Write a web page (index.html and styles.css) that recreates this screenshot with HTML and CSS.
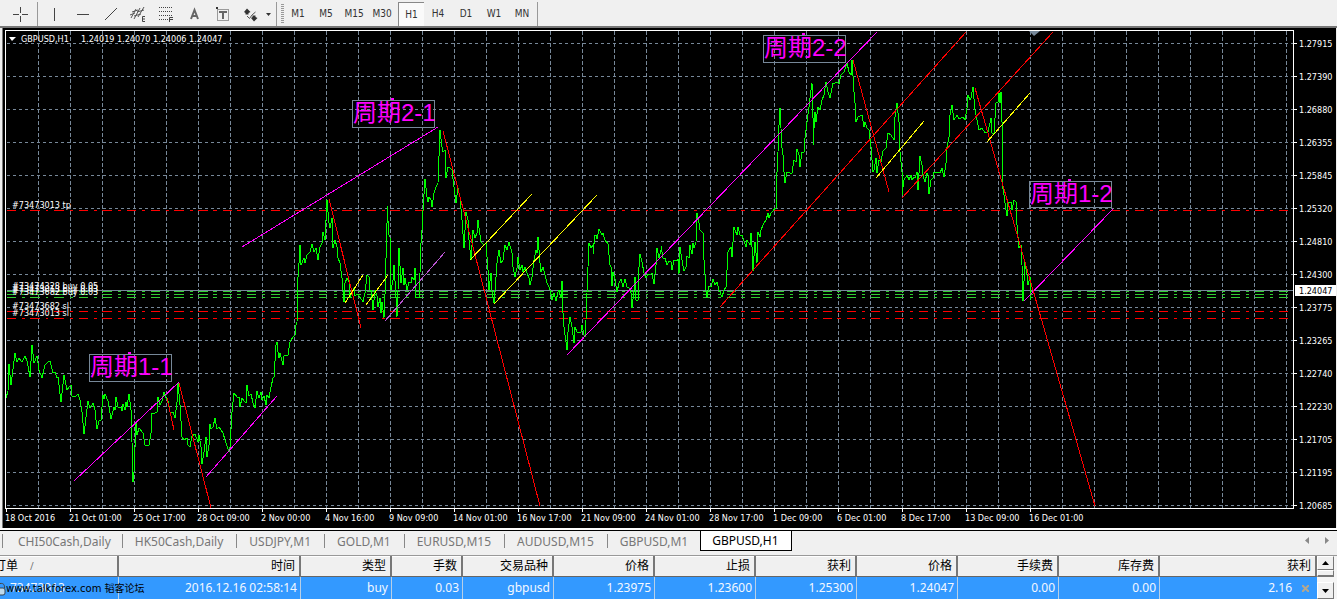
FILE: index.html
```html
<!DOCTYPE html>
<html lang="zh-CN">
<head>
<meta charset="utf-8">
<title>GBPUSD,H1</title>
<link rel="stylesheet" href="styles.css">
</head>
<body>
<div class="app">
  <header class="toolbar">
    <div class="tools">
      <button class="tool first" aria-label="Crosshair"><svg width="16" height="16" viewBox="0 0 16 16"><path d="M7.500 1V7M7.500 10V16M0 8.500H6M9 8.500H15" class="ink"/></svg></button>
    </div>
    <div class="tools sep">
      <button class="tool" aria-label="Vertical line"><svg width="16" height="16" viewBox="0 0 16 16"><path d="M8.500 2V15" class="ink"/></svg></button>
      <button class="tool" aria-label="Horizontal line"><svg width="16" height="16" viewBox="0 0 16 16"><path d="M3 8.500H15" class="ink"/></svg></button>
      <button class="tool" aria-label="Trendline"><svg width="16" height="16" viewBox="0 0 16 16"><path d="M3 14L15 2" class="ink"/></svg></button>
      <button class="tool" aria-label="Equidistant channel"><svg width="16" height="16" viewBox="0 0 16 16"><path d="M1 12L6 3M4 13L10 2M8 11L14 1M0 9L5 7M2 6L8 4M4 10L11 8M7 6L14 4" class="ink wide"/><path d="M15 10.500H12.500V15.500H15M12 13H15" class="ink"/></svg></button>
      <button class="tool" aria-label="Fibonacci retracement"><svg width="16" height="16" viewBox="0 0 16 16"><path d="M1 1.500H15M1 5.500H15M1 9.500H15M1 13.500H10" class="ink dots"/><path d="M15 11.500H11.500V16M12 13.500H15" class="ink"/></svg></button>
      <button class="tool" aria-label="Text"><svg width="16" height="16" viewBox="0 0 16 16"><path d="M5 13L8.500 4L12 13M6 10H11" class="ink bold"/></svg></button>
      <button class="tool" aria-label="Text label"><svg width="16" height="16" viewBox="0 0 16 16"><path d="M3.500 3.500H14.500V14.500H3.500Z" class="ink dots"/><path d="M2 1H4V3H2Z" class="solid"/><path d="M5 6H13M9 6V13" class="ink bold"/></svg></button>
      <button class="tool arrows" aria-label="Arrows"><svg width="30" height="16" viewBox="0 0 30 16"><path d="M1 6L4 2.500L7.500 6L5.500 7V8.500H2.500V7ZM8 12L9.500 11V9.500H12.500V11L14.500 12L11 15.500ZM23 7H28L25.500 10Z" class="solid"/><path d="M4 10L6.500 12.500L9 9L12.500 6" class="ink wide"/></svg></button>
    </div>
    <nav class="frames" aria-label="Timeframe">
      <button class="frame">M1</button><button class="frame">M5</button><button class="frame">M15</button><button class="frame">M30</button><button class="frame on">H1</button><button class="frame">H4</button><button class="frame">D1</button><button class="frame">W1</button><button class="frame">MN</button>
    </nav>
  </header>

  <main class="chart">
    <svg class="plot" viewBox="0 28 1337 500" role="img" aria-label="GBPUSD H1">
      <defs>
        <pattern id="cols" x="6" y="31" width="32" height="6" patternUnits="userSpaceOnUse"><rect width="1" height="4" class="grid"/></pattern>
        <pattern id="rows" x="7" y="43" width="6" height="33" patternUnits="userSpaceOnUse"><rect width="3" height="1" class="grid"/></pattern>
        <pattern id="ticks" x="6" y="509" width="64" height="3" patternUnits="userSpaceOnUse"><rect width="1" height="3" class="white"/></pattern>
        <pattern id="marks" x="1294" y="43" width="3" height="33" patternUnits="userSpaceOnUse"><rect width="3" height="1" class="white"/></pattern>
        <clipPath id="area"><rect x="6" y="31" width="1287" height="477"/></clipPath>
      </defs>
      <rect x="0" y="28" width="2" height="500" class="edge"/>
      <rect x="2" y="28" width="1" height="500" class="shade"/>
      <rect x="1336" y="28" width="1" height="500" class="edge"/>
      <rect x="7" y="31" width="1286" height="477" fill="url(#cols)"/>
      <rect x="7" y="31" width="1286" height="477" fill="url(#rows)"/>
      <rect x="6" y="509" width="1030" height="3" fill="url(#ticks)"/>
      <rect x="1294" y="31" width="3" height="477" fill="url(#marks)"/>

      <g class="lines" transform="translate(.5 .5)">
        <path class="level sell" d="M6 210H1287M6 311H1287M6 318H1287"/>
        <path class="level buy" d="M6 291H1287M6 294H1287M6 297H1287"/>
        <path class="bid" d="M6 290H1293"/>
      </g>
      <g class="lines" clip-path="url(#area)">
        <path class="price" d="M6 398L8 391 9 364 11 385 15 353 17 362 19 358 22 362 25 356 27 361 28 366 30 377 32 345 34 363 37 356 39 370 42 378 45 365 48 362 50 361 53 373 55 372 57 378 58 377 61 402 64 375 67 390 69 387 71 385 72 396 75 397 78 394 80 400 82 412 84 434 88 401 90 408 93 403 95 410 97 429 99 421 101 420 103 395 104 399 105 394 108 401 111 419 114 407 115 410 116 397 118 407 121 407 122 411 123 404 125 410 126 402 127 407 129 394 131 410 132 442 133 482 134 472 136 423 137 435 139 428 143 433 145 445 149 445 151 433 152 413 155 413 157 412 158 397 160 405 162 401 164 392 166 398 168 401 170 412 173 412 175 418 177 402 178 383 180 405 182 437 184 440 187 438 188 445 190 447 192 436 195 434 198 442 199 435 201 447 202 464 204 452 206 437 207 457 209 445 210 424 211 429 213 427 215 418 217 429 219 427 221 430 223 433 225 440 227 446 229 452 230 447 232 412 233 402 234 393 237 397 239 397 240 407 242 398 244 401 246 403 247 385 249 396 251 394 253 403 255 408 257 391 259 398 261 392 262 400 264 396 266 405 267 395 269 398 271 387 273 378 274 377 276 345 277 342 278 352 279 358 280 353 283 365 284 356 288 355 290 342 293 337 295 335 295 328 297 322 298 277 299 263 300 245 301 265 304 258 305 263 307 255 310 252 312 244 314 252 316 248 318 260 320 247 322 243 323 232 325 240 327 200 329 223 330 228 332 218 333 248 335 240 337 247 338 258 340 263 342 278 344 302 345 283 347 278 349 282 350 298 352 292 354 288 355 296 357 294 360 297 363 302 365 293 367 275 369 277 370 290 371 290 373 310 375 290 377 296 378 307 380 298 381 313 382 302 384 318 385 295 387 223 387 206 389 235 390 237 391 290 393 280 394 265 396 297 397 317 398 290 399 248 401 283 403 268 404 285 405 278 407 290 409 282 411 283 412 277 414 280 415 268 416 298 419 297 420 273 421 243 422 230 423 210 425 179 427 197 428 202 429 197 431 200 432 207 434 193 436 187 438 183 440 130 442 147 443 152 445 150 446 178 448 167 450 168 452 170 454 187 456 203 458 188 460 197 462 220 464 248 466 212 468 220 469 240 471 260 473 230 475 238 477 233 478 220 480 235 481 242 484 245 486 243 488 270 489 290 491 273 492 292 494 303 496 277 497 263 499 250 501 263 503 260 505 245 507 250 509 242 512 253 513 267 515 277 517 268 518 257 520 270 522 265 523 272 525 267 527 273 529 278 530 285 532 277 534 260 536 250 537 253 538 237 540 263 541 272 543 267 545 275 547 283 549 287 550 290 552 300 554 293 556 301 558 292 559 290 561 297 562 281 563 313 564 327 567 350 568 332 570 317 572 327 574 343 575 327 577 332 581 332 582 325 584 335 585 337 586 320 587 293 588 267 589 243 591 248 593 245 593 254 595 235 596 235 597 239 599 229 602 235 603 233 605 240 608 244 610 265 611 267 612 286 613 272 615 279 617 292 619 283 621 279 623 287 625 279 627 287 629 288 631 293 632 308 634 290 635 277 636 300 638 300 639 267 640 254 642 262 644 273 646 278 648 274 651 274 652 273 654 284 656 265 657 248 659 258 661 250 661 246 663 258 665 258 667 265 669 261 671 262 672 270 674 260 677 261 678 259 679 274 680 247 682 260 684 271 686 267 687 256 689 258 690 245 692 254 693 243 694 248 696 242 697 213 699 223 700 230 703 233 704 260 706 290 707 297 709 286 711 287 713 279 715 285 717 282 719 290 722 297 724 290 726 287 727 270 728 252 731 247 732 257 734 227 735 230 737 235 738 227 740 235 742 235 743 238 746 247 747 240 750 245 751 233 752 247 753 271 755 242 757 263 758 232 760 237 761 230 763 225 766 220 768 213 769 218 771 213 773 211 775 208 776 208 777 172 778 152 779 125 780 108 782 148 783 155 784 172 785 183 787 172 790 173 792 173 794 160 796 162 797 149 799 155 800 167 802 152 804 152 805 138 807 122 809 107 811 90 812 83 813 118 813 145 815 112 816 122 818 107 820 110 822 100 824 95 826 82 828 92 830 98 833 83 835 83 837 82 839 84 841 75 844 72 847 63 849 72 851 75 852 60 854 92 855 103 856 122 858 117 862 115 864 127 865 122 867 128 869 130 871 147 873 172 874 170 876 158 877 173 879 160 881 162 883 151 886 148 888 133 891 135 894 140 895 117 897 103 899 122 900 152 902 172 902 195 904 180 907 175 909 180 911 175 912 180 914 177 915 178 917 172 918 190 920 156 922 165 923 175 925 182 927 173 928 175 929 194 931 180 933 178 934 172 937 172 940 173 942 168 944 177 946 163 947 147 949 137 950 115 952 105 954 120 957 115 959 119 963 117 965 120 967 108 968 95 970 100 971 98 973 87 975 110 976 115 979 130 982 128 985 133 988 132 991 118 992 133 994 133 996 103 998 102 999 93 1000 103 1001 92 1002 122 1002 182 1004 195 1005 203 1007 216 1008 202 1011 202 1012 210 1014 200 1016 202 1017 225 1019 248 1021 245 1022 265 1023 301 1025 262 1027 275 1028 285 1030 277 1031 300"/>
        <path class="magenta" d="M74 481L179 382M206 477L277 396M242 247L438 127M567 355L877 32M1024 301L1113 209"/>
        <path class="orchid" d="M385 321L445 252"/>
        <path class="red" d="M179 383L211 508M167 398L174 430M329 199L361 328M443 131L540 506M720 307L966 32M853 60L889 192M902 198L1053 32M975 88L1095 506"/>
        <path class="yellow" d="M345 303L363 275M366 305L388 275M470 260L532 194M494 304L597 195M876 178L924 121M987 142L1030 93"/>
      </g>
      <g class="lines" transform="translate(.5 .5)">
        <path class="frame-line" d="M5 508V30H1293V508H5"/>
        <path class="box" d="M89 354H171V381H89ZM352 100H434V127H352ZM763 35H845V62H763ZM1029 181H1111V207H1029Z"/>
      </g>
      <path class="magenta-dot" d="M128 352h3v2h-3zM391 98h3v2h-3zM802 33h3v2h-3zM1068 179h3v2h-3z"/>
      <path class="marker" d="M1029 31H1040L1034 36Z"/>
      <path class="white" d="M9 37H16L12 41Z"/>
      <rect x="1295" y="285" width="41" height="11" class="white"/>

      <g class="note">
        <text x="90" y="375">周期1-1</text>
        <text x="353" y="121">周期2-1</text>
        <text x="764" y="56">周期2-2</text>
        <text x="1030" y="202">周期1-2</text>
      </g>
      <g class="small">
        <text x="21" y="42">GBPUSD,H1</text><text x="81" y="42">1.24019</text><text x="117" y="42">1.24070</text><text x="153" y="42">1.24006</text><text x="189" y="42">1.24047</text>
        <text x="12" y="208">#73473013 tp</text>
        <text x="12" y="289">#73474328 buy 0.05</text>
        <text x="12" y="292">#73473013 buy 0.03</text>
        <text x="12" y="295">#73473682 buy 0.03</text>
        <text x="12" y="309">#73473682 sl</text>
        <text x="12" y="316">#73473013 sl</text>
        <text x="1299" y="47">1.27915</text><text x="1299" y="80">1.27390</text><text x="1299" y="113">1.26880</text><text x="1299" y="146">1.26355</text><text x="1299" y="179">1.25845</text><text x="1299" y="212">1.25320</text><text x="1299" y="245">1.24810</text><text x="1299" y="278">1.24300</text><text x="1299" y="294" class="dark">1.24047</text><text x="1299" y="311">1.23775</text><text x="1299" y="344">1.23265</text><text x="1299" y="377">1.22740</text><text x="1299" y="410">1.22230</text><text x="1299" y="443">1.21705</text><text x="1299" y="476">1.21195</text><text x="1299" y="509">1.20685</text>
        <text x="5" y="521">18 Oct 2016</text><text x="69" y="521">21 Oct 01:00</text><text x="133" y="521">25 Oct 17:00</text><text x="197" y="521">28 Oct 09:00</text><text x="261" y="521">2 Nov 00:00</text><text x="325" y="521">4 Nov 16:00</text><text x="389" y="521">9 Nov 09:00</text><text x="453" y="521">14 Nov 01:00</text><text x="517" y="521">16 Nov 17:00</text><text x="581" y="521">21 Nov 09:00</text><text x="645" y="521">24 Nov 01:00</text><text x="709" y="521">28 Nov 17:00</text><text x="773" y="521">1 Dec 09:00</text><text x="837" y="521">6 Dec 01:00</text><text x="901" y="521">8 Dec 17:00</text><text x="965" y="521">13 Dec 09:00</text><text x="1029" y="521">16 Dec 01:00</text>
      </g>
    </svg>
  </main>

  <nav class="tabs" aria-label="Charts">
    <button class="tab lead">CHI50Cash,Daily</button><button class="tab">HK50Cash,Daily</button><button class="tab">USDJPY,M1</button><button class="tab">GOLD,M1</button><button class="tab">EURUSD,M15</button><button class="tab">AUDUSD,M15</button><button class="tab">GBPUSD,M1</button><button class="tab active">GBPUSD,H1</button>
    <div class="pager">
      <button class="page" aria-label="Previous"><svg width="4" height="7" viewBox="0 0 4 7"><path d="M4 0V7L0 3.500Z"/></svg></button>
      <button class="page" aria-label="Next"><svg width="4" height="7" viewBox="0 0 4 7"><path d="M0 0V7L4 3.500Z"/></svg></button>
    </div>
  </nav>

  <section class="orders">
    <table class="grid-table">
      <colgroup><col class="c119"><col class="c182"><col class="c91"><col class="c71"><col class="c91"><col class="c101"><col class="c101"><col class="c101"><col class="c101"><col class="c101"><col class="c101"><col class="c157"></colgroup>
      <thead><tr><th class="order-head">订单<span class="sort">/</span></th><th>时间</th><th>类型</th><th>手数</th><th>交易品种</th><th>价格</th><th>止损</th><th>获利</th><th>价格</th><th>手续费</th><th>库存费</th><th>获利</th></tr></thead>
      <tbody><tr><td class="order-cell"><svg class="lock" width="8" height="14" viewBox="0 0 8 14"><path d="M0 1.500C4 1 4.500 3 4.500 6" fill="none" stroke="#444"/><rect x="-4" y="6" width="9" height="7" rx="2" fill="#bdd9ec" stroke="#345"/></svg>73473013</td><td>2016.12.16 02:58:14</td><td>buy</td><td>0.03</td><td>gbpusd</td><td>1.23975</td><td>1.23600</td><td>1.25300</td><td>1.24047</td><td>0.00</td><td>0.00</td><td class="profit">2.16<button class="close" aria-label="Close order"><svg width="7" height="7" viewBox="0 0 7 7"><path d="M0 0L7 7M7 0L0 7"/></svg></button></td></tr></tbody>
    </table>
    <div class="scroll">
      <button class="step" aria-label="Up"><svg width="7" height="4" viewBox="0 0 7 4"><path d="M0 4H7L3.500 0Z"/></svg></button>
      <div class="thumb"></div>
      <button class="step down" aria-label="Down"><svg width="7" height="4" viewBox="0 0 7 4"><path d="M0 0H7L3.500 4Z"/></svg></button>
    </div>
    <div class="watermark">www.talkforex.com 韬客论坛</div>
  </section>
</div>
</body>
</html>
```

FILE: styles.css
```css
* { box-sizing: border-box; }
body { margin: 0; background: #f0f0f0; color: #000; font: 12px/16px "Noto Sans", "Noto Sans CJK SC", sans-serif; }
button { margin: 0; padding: 0; border: 0; background: none; color: inherit; font: inherit; cursor: pointer; }
.app { display: flex; flex-direction: column; overflow: hidden; }

.toolbar { display: flex; height: 28px; padding-top: 2px; border-bottom: 2px solid #777; }
.tools { display: flex; padding-left: 2px; }
.tools.sep { border-left: 1px solid #999; }
.tools:first-child { padding-left: 5px; }
.tool { width: 28px; display: flex; align-items: center; justify-content: center; }
.tool.first { width: 32px; }
.tool.arrows { width: 40px; padding-left: 4px; }
.ink { fill: none; stroke: #444; stroke-width: 1; }
.ink.wide { stroke: #555; }
.ink.bold { stroke: #666; stroke-width: 2; }
.ink.dots { stroke-dasharray: 1 1; }
.solid { fill: #333; }
.frames { display: flex; border-left: 1px solid #999; border-right: 1px solid #999; padding: 0 1px 0 7px; background: repeating-linear-gradient(#999 0 1px, #f0f0f0 1px 2px) 4px 2px / 3px 20px no-repeat; }
.frame { width: 28px; font: 10px/22px "DejaVu Sans Condensed", "DejaVu Sans", sans-serif; color: #333; }
.frame.on { width: 26px; margin-left: 2px; background: #fafafa; border-top: 1px solid #888; border-left: 1px solid #888; line-height: 20px; }

.chart { background: #000; }
.plot { display: block; width: 100%; height: auto; }
.grid { fill: #778899; }
.white { fill: #fff; }
.edge { fill: #eee; }
.shade { fill: #777; }
.lines path { fill: none; stroke-width: 1; shape-rendering: crispEdges; }
.lines .level { stroke-dasharray: 9 6 3 6; }
.lines .sell, .lines .red { stroke: #f00; }
.lines .buy { stroke: #32cd32; }
.lines .bid, .lines .box { stroke: #778899; }
.lines .price { stroke: #0f0; }
.lines .magenta { stroke: #f0f; }
.lines .orchid { stroke: #ba55d3; }
.lines .yellow { stroke: #ff0; }
.lines .frame-line { stroke: #fff; }
.magenta-dot { fill: #f0f; }
.marker { fill: #778899; }
.note { fill: #f0f; font: 24px "Liberation Sans", "Noto Sans CJK SC", sans-serif; }
.small { fill: #fff; font: 9px "DejaVu Sans Condensed", "DejaVu Sans", sans-serif; }
.small .dark { fill: #000; }

.tabs { display: flex; align-items: flex-start; height: 27px; padding-top: 1px; color: #777; background: linear-gradient(#fff 0 2px, #000 2px 3px, transparent 3px); }
.tabs::before { content: ""; width: 1px; }
.tab { display: flex; padding: 3px 13px 0; line-height: 20px; white-space: nowrap; }
.tab::before { content: ""; width: 1px; height: 14px; margin: 2px 12px 0 -13px; background: #888; }
.tab.lead { padding: 3px 11px 0 17px; }
.tab.lead::before { margin: 2px 15px 0 -16px; }
.tab.active { margin: 2px 0 0 -1px; padding: 0 12px 0 11px; background: #fff; color: #000; border: 1px solid #000; border-top: 0; line-height: 19px; }
.tab.active::before { display: none; }
.pager { display: flex; gap: 16px; margin-left: auto; padding: 8px 8px 0 0; }
.page { display: flex; fill: #888; }

.orders { position: relative; display: flex; border-top: 1px solid #999; height: 44px; overflow: hidden; }
.grid-table { flex: 1; width: 0; table-layout: fixed; border-collapse: separate; border-spacing: 0; }
.c119 { width: 119px; } .c182 { width: 182px; } .c91 { width: 91px; } .c71 { width: 71px; } .c101 { width: 101px; } .c157 { width: 157px; }
th, td { padding: 0; text-align: right; white-space: nowrap; overflow: hidden; }
th { height: 21px; padding-right: 4px; font-weight: 400; border-right: 2px solid #777; border-bottom: 1px solid #666; box-shadow: inset 0 1px #fff; }
td { height: 22px; padding-right: 3px; background: #3399ff; color: #f4f8ff; border-right: 1px solid #b8cfe6; }
.order-head { text-align: left; text-indent: -6px; }
.sort { margin-left: 12px; color: #777; font-size: 10px; }
.order-cell { text-align: left; }
.lock { vertical-align: middle; margin-right: 2px; }
td.profit { border-right: 0; padding-right: 8px; }
.close { margin-left: 10px; }
.close path { stroke: #b5a78e; stroke-width: 2; }
.scroll { width: 20px; padding-right: 3px; background: #f5f5f5; display: flex; flex-direction: column; }
.step { height: 17px; display: flex; align-items: center; justify-content: center; border: 1px solid #fff; border-right-color: #777; border-bottom-color: #777; background: #f0f0f0; }
.thumb { height: 8px; border: 1px solid #fff; border-right: 1px solid #777; border-bottom: 2px solid #777; background: #f0f0f0; }
.down { margin-top: 5px; flex: none; }
.watermark { position: absolute; left: 6px; bottom: 2px; color: #000; font: 10px/16px "DejaVu Sans", "Noto Sans CJK SC", sans-serif; }
```
